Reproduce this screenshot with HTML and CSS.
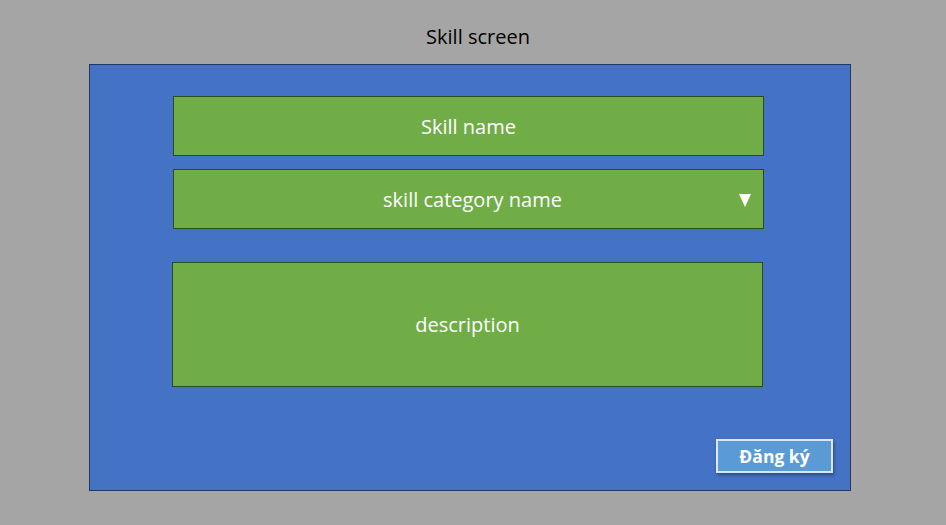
FILE: index.html
```html
<!DOCTYPE html>
<html>
<head>
<meta charset="utf-8">
<link rel="stylesheet" href="styles.css">
</head>
<body>
<div class="title">Skill screen</div>
<div class="panel">
  <div class="field f1">Skill name</div>
  <div class="field f2">skill category name<span class="arrow"></span></div>
  <div class="field f3">description</div>
  <button class="btn">Đăng ký</button>
</div>
</body>
</html>
```
FILE: styles.css
```css
html, body {
  margin: 0;
  padding: 0;
  background: #a5a5a5;
  width: 946px;
  height: 525px;
  overflow: hidden;
  font-family: "Open Sans", "Noto Sans", sans-serif;
}
.title {
  height: 64px;
  display: flex;
  align-items: center;
  justify-content: center;
  font-size: 20px;
  color: #000;
  padding-left: 10px;
  padding-top: 8px;
  box-sizing: border-box;
}
.panel {
  margin-left: 89px;
  width: 762px;
  height: 427px;
  box-sizing: border-box;
  background: #4472c4;
  border: 1px solid #1f3864;
  display: flex;
  flex-direction: column;
  padding: 31px 17px 17px 83px;
}
.field {
  width: 591px;
  box-sizing: border-box;
  background: #70ad47;
  border: 1px solid #2e4a1f;
  color: #fff;
  font-size: 20px;
  display: flex;
  align-items: center;
  justify-content: center;
  position: relative;
}
.f1 { height: 60px; }
.f2 { height: 60px; margin-top: 13px; padding-left: 8px; }
.f3 { height: 125px; margin-top: 33px; margin-left: -1px; }
.arrow {
  position: absolute;
  right: 12px;
  top: 24px;
  width: 0;
  height: 0;
  border-left: 6px solid transparent;
  border-right: 6px solid transparent;
  border-top: 13px solid #fff;
}
.btn {
  margin-top: auto;
  align-self: flex-end;
  width: 117px;
  height: 34px;
  background: #5b9bd5;
  border: 2px solid #dce6f2;
  box-shadow: 1px 2px 3px rgba(0,0,0,0.35);
  color: #fff;
  font-family: "Open Sans", "Noto Sans", sans-serif;
  font-weight: bold;
  font-size: 17.5px;
  padding: 0;
}
```
